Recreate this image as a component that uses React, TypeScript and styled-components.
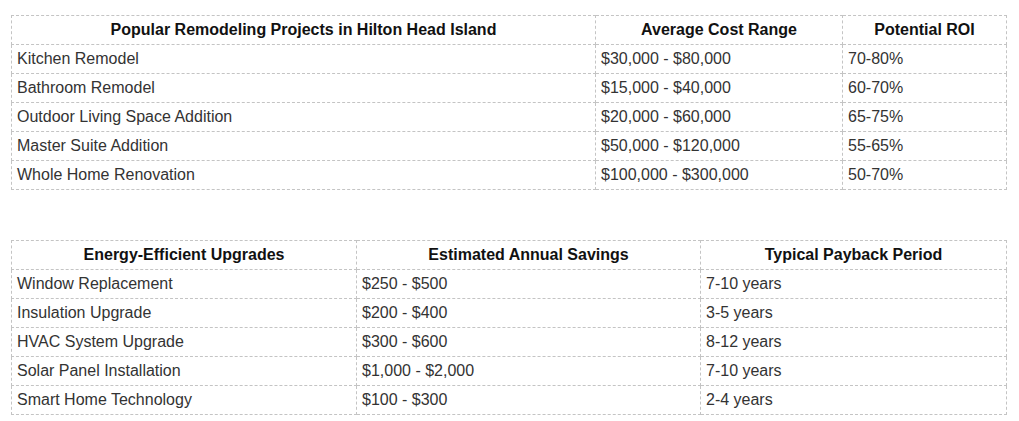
import React from 'react';
import styled, { createGlobalStyle } from 'styled-components';

const GlobalStyle = createGlobalStyle`
  body {
    margin: 0;
    background: #ffffff;
    font-family: Arial, "Liberation Sans", sans-serif;
  }
`;

interface TableData {
  widths: number[];
  head: string[];
  rows: string[][];
}

const remodeling: TableData = {
  widths: [584, 247, 164],
  head: ['Popular Remodeling Projects in Hilton Head Island', 'Average Cost Range', 'Potential ROI'],
  rows: [
    ['Kitchen Remodel', '$30,000 - $80,000', '70-80%'],
    ['Bathroom Remodel', '$15,000 - $40,000', '60-70%'],
    ['Outdoor Living Space Addition', '$20,000 - $60,000', '65-75%'],
    ['Master Suite Addition', '$50,000 - $120,000', '55-65%'],
    ['Whole Home Renovation', '$100,000 - $300,000', '50-70%'],
  ],
};

const energy: TableData = {
  widths: [345, 344, 306],
  head: ['Energy-Efficient Upgrades', 'Estimated Annual Savings', 'Typical Payback Period'],
  rows: [
    ['Window Replacement', '$250 - $500', '7-10 years'],
    ['Insulation Upgrade', '$200 - $400', '3-5 years'],
    ['HVAC System Upgrade', '$300 - $600', '8-12 years'],
    ['Solar Panel Installation', '$1,000 - $2,000', '7-10 years'],
    ['Smart Home Technology', '$100 - $300', '2-4 years'],
  ],
};

const DataTable: React.FC<{ data: TableData }> = ({ data }) => (
  <Table>
    <colgroup>
      {data.widths.map((w, i) => (
        <col key={i} style={{ width: w }} />
      ))}
    </colgroup>
    <thead>
      <tr>
        {data.head.map((h) => (
          <HeadCell key={h}>{h}</HeadCell>
        ))}
      </tr>
    </thead>
    <tbody>
      {data.rows.map((row) => (
        <tr key={row[0]}>
          {row.map((cell, i) => (
            <Cell key={i}>{cell}</Cell>
          ))}
        </tr>
      ))}
    </tbody>
  </Table>
);

const App: React.FC = () => (
  <>
    <GlobalStyle />
    <Page>
      <DataTable data={remodeling} />
      <DataTable data={energy} />
    </Page>
  </>
);

export default App;

const Page = styled.div`
  display: flex;
  flex-direction: column;
  gap: 50px;
  padding: 15px 13px 0 11px;
`;

const Table = styled.table`
  width: 995px;
  table-layout: fixed;
  border-collapse: collapse;
  font-size: 16px;
  line-height: 18px;
`;

const HeadCell = styled.th`
  border: 1px dashed #c4c4c4;
  padding: 5px 5px;
  font-weight: bold;
  text-align: center;
  color: #111111;
`;

const Cell = styled.td`
  border: 1px dashed #c4c4c4;
  padding: 5px 5px;
  color: #333333;
  text-align: left;
`;
